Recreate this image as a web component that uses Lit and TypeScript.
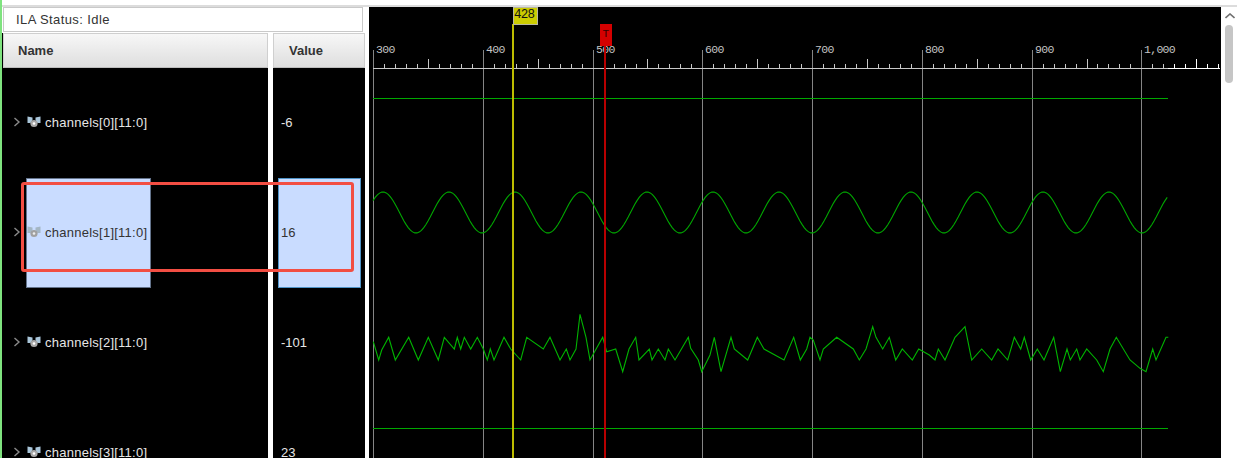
import { LitElement, html, css, svg } from 'lit';
import { customElement } from 'lit/decorators.js';

const rows = [
  { name: 'channels[0][11:0]', value: '-6' },
  { name: 'channels[1][11:0]', value: '16', selected: true },
  { name: 'channels[2][11:0]', value: '-101' },
  { name: 'channels[3][11:0]', value: '23' },
];

// noise trace, read off the reference: [x, y] in page pixels
const noise: number[][] = [
  [373.3,341.7],[378.7,360],[381.7,350],[388.7,337.3],[395.3,360],[408.7,337.3],[418.3,360],[428.3,337.3],[438.3,360],
  [444.3,337.3],[454.3,349],[457.3,337.3],[460.7,349],[464.3,337.3],[470.7,349],[477.3,337.3],[483.3,349],[487.3,360],
  [490.3,349],[494,360],[504,337.3],[510.7,349],[520.7,360],[526.7,337.3],[543.3,349],[550,337.3],[560,360],[566.3,349],
  [570,360],[576,349],[580,314.3],[586,337.3],[590,360],[602.7,337.3],[606.7,351.7],[615.7,349],[622.7,371.7],[629,349],
  [635.7,337.3],[639,360],[649.3,349],[652,360],[658.3,349],[665,360],[668.3,349],[675,360],[688.3,337.3],[690.7,348.3],
  [698.3,360],[701.7,371.7],[710,355],[714.3,337.3],[721,371.7],[731,337.3],[734.3,349],[747.7,360],[757.3,337.3],
  [764,349],[784,360],[793.7,337.3],[800.3,360],[806.7,349],[810,337.3],[813.3,340],[820,360],[823.3,349],[836.7,337.3],
  [853.3,349],[859.3,360],[866,349],[872.7,326.7],[876,337.3],[882.7,349],[889.3,337.3],[895.7,360],[902.3,349],
  [912.3,360],[918.7,349],[929.3,355],[935,360],[938.3,349],[945,360],[955,337.3],[965,326.7],[971.7,360],[981.7,349],
  [991.7,360],[998,349],[1007.7,360],[1014.3,337.3],[1020.7,349],[1024.3,337.3],[1030.7,360],[1037.3,349],[1044,360],
  [1053.7,337.3],[1060.3,371.7],[1067,349],[1070.3,360],[1076.7,349],[1080,360],[1086.7,349],[1096.7,360],[1103.3,371.7],
  [1110,349],[1116.3,337.3],[1130,360],[1140,368.3],[1146,371.7],[1152.7,349],[1156,360],[1166,337.3],[1168.3,337.3],
];

const toX = (v: number) => 373 + (v - 300) * 1.0977;

function sinePoints() {
  const pts: string[] = [];
  for (let x = 373; x <= 1168; x += 2.2) {
    pts.push(`${x},${(212.5 - 20.5 * Math.cos(((x - 383) / 66) * Math.PI * 2)).toFixed(1)}`);
  }
  return pts.join(' ');
}

@customElement('app-root')
export class AppRoot extends LitElement {
  static styles = css`
    :host {
      display: block;
      width: 1237px;
      height: 458px;
      overflow: hidden;
      background: #fff;
      font-family: 'Liberation Sans', Arial, sans-serif;
      font-size: 13px;
    }
    .app { position: relative; display: flex; height: 458px; }
    .strip { width: 2px; background: #7fe37f; flex: none; }
    .main { flex: 1; display: flex; flex-direction: column; min-width: 0; }
    .topbar { height: 5px; border-bottom: 2px solid #dcdcdc; flex: none; }
    .panes { flex: 1; display: flex; min-height: 0; }
    .left { width: 367px; flex: none; display: flex; flex-direction: column; }
    .status {
      height: 25px;
      box-sizing: border-box;
      margin: 0 6px 1px 1px;
      padding-left: 12px;
      display: flex;
      align-items: center;
      border: 1px solid #c9c9c9;
      color: #333;
      letter-spacing: 0.4px;
    }
    .cols { flex: 1; display: flex; gap: 5px; min-height: 0; }
    .col { display: flex; flex-direction: column; overflow: hidden; background: #000; }
    .col.names { width: 266px; }
    .col.values { width: 92px; }
    .head {
      height: 35px;
      flex: none;
      box-sizing: border-box;
      display: flex;
      align-items: center;
      background: linear-gradient(#f7f7f7, #dedede);
      border: 1px solid #cfcfcf;
      border-bottom-color: #bdbdbd;
      font-weight: bold;
      color: #333;
    }
    .names .head { padding-left: 14px; margin-left: 1px; }
    .values .head { padding-left: 15px; }
    .row { height: 110px; flex: none; display: flex; align-items: center; }
    .chevron { width: 8px; height: 10px; margin: 0 5px 2px 11px; flex: none; }
    .cell {
      height: 110px;
      box-sizing: border-box;
      padding-bottom: 2px;
      display: flex;
      align-items: center;
      color: #e6e6e6;
      border: 1px solid transparent;
    }
    .name-cell { width: 125px; gap: 4px; letter-spacing: 0.25px; white-space: nowrap; }
    .icon { width: 14px; height: 12px; flex: none; }
    .value-cell { width: 83px; margin-left: 5px; padding-left: 2px; }
    .selected { background: #c9dcff; color: #333; }
    .name-cell.selected { border-color: #64748c; }
    .value-cell.selected { border-color: #4f94c8; }
    .wave { flex: 1; background: #000; min-width: 0; }
    .wave svg { display: block; }
    .wave text { font-family: 'Liberation Mono', monospace; }
    .scrollbar { width: 16px; flex: none; display: flex; flex-direction: column; align-items: center; }
    .scrollbar svg { margin: 6px 0 0 2px; display: block; }
    .thumb { width: 8px; height: 58px; margin-top: 6px; border-radius: 4px; background: #c6c6c6; }
    .callout {
      position: absolute;
      left: 21px;
      top: 182px;
      width: 333px;
      height: 90px;
      box-sizing: border-box;
      border: 3px solid #f24e43;
      border-radius: 3px;
    }
  `;

  renderChevron() {
    return html`<svg class="chevron" viewBox="0 0 8 10">
      <path d="M1.5 1 L6 5 L1.5 9" fill="none" stroke="#8a8a8a" stroke-width="1.4" />
    </svg>`;
  }

  renderIcon(selected?: boolean) {
    const wing = selected ? '#a4b6c4' : '#a9c6da';
    const hub = selected ? '#a0a0a0' : '#a8a8a8';
    return html`<svg class="icon" viewBox="0 0 14 12">
      <path d="M0.5 0.5 L5.5 1.5 L5.5 4 L3.5 7 L0.5 7 Z" fill=${wing} />
      <path d="M13.5 0.5 L8.5 1.5 L8.5 4 L10.5 7 L13.5 7 Z" fill=${wing} />
      <circle cx="7" cy="7.5" r="3.6" fill=${hub} />
      <circle cx="7" cy="7.5" r="1.3" fill=${selected ? '#eee' : '#fff'} />
    </svg>`;
  }

  renderRuler() {
    const ticks = [];
    for (let v = 300; v <= 1070; v += 10) {
      const x = Math.round(toX(v)) + 0.5;
      if (v % 100 === 0) continue;
      const top = v % 50 === 0 ? 59 : 64;
      ticks.push(svg`<line x1=${x} x2=${x} y1=${top} y2="68" stroke=${x > 1168 ? '#fff' : '#c8c8c8'} />`);
    }
    return ticks;
  }

  renderGrid() {
    const out = [];
    for (let v = 300; v <= 1000; v += 100) {
      const x = Math.round(toX(v)) + 0.5;
      out.push(svg`<line x1=${x} x2=${x} y1="50" y2="458" stroke="#858585" />`);
      const label = v === 1000 ? '1,000' : String(v);
      out.push(svg`<text x=${x + 2.5} y="52.5" fill="#c4c4c4" font-size="11.5" letter-spacing="-0.7">${label}</text>`);
    }
    return out;
  }

  renderWave() {
    return html`<svg width="852" height="451" viewBox="369 7 852 451">
      <g shape-rendering="crispEdges">
        ${this.renderGrid()}
        <line x1="373" x2="1168" y1="68.5" y2="68.5" stroke="#c8c8c8" />
        <line x1="1168" x2="1220" y1="68.5" y2="68.5" stroke="#fff" />
        ${this.renderRuler()}
        <line x1="373" x2="1168" y1="98.5" y2="98.5" stroke="#00a800" />
        <line x1="373" x2="1168" y1="428.5" y2="428.5" stroke="#00a800" />
      </g>
      <polyline points=${sinePoints()} fill="none" stroke="#00a800" stroke-width="1.1" />
      <polyline points=${noise.map((p) => p.join(',')).join(' ')} fill="none" stroke="#00b400" stroke-width="1.1" />
      <g shape-rendering="crispEdges">
        <rect x="512" y="24" width="2" height="434" fill="#bcbc00" />
        <rect x="513" y="7" width="24" height="17" fill="#cccc00" stroke="#b8b8a0" />
        <rect x="604" y="46" width="2" height="412" fill="#b80000" />
        <rect x="600" y="24" width="12" height="22" fill="#d40000" />
      </g>
      <text x="514" y="18" fill="#111" font-size="12.5" letter-spacing="-0.8">428</text>
      <text x="602.5" y="36.5" fill="#300" font-size="11">T</text>
    </svg>`;
  }

  render() {
    return html`
      <div class="app">
        <div class="strip"></div>
        <div class="main">
          <div class="topbar"></div>
          <div class="panes">
            <div class="left">
              <div class="status">ILA Status: Idle</div>
              <div class="cols">
                <div class="col names">
                  <div class="head">Name</div>
                  ${rows.map((r) => html`
                    <div class="row">
                      ${this.renderChevron()}
                      <div class="cell name-cell ${r.selected ? 'selected' : ''}">
                        ${this.renderIcon(r.selected)}
                        <span>${r.name}</span>
                      </div>
                    </div>`)}
                </div>
                <div class="col values">
                  <div class="head">Value</div>
                  ${rows.map((r) => html`
                    <div class="row">
                      <div class="cell value-cell ${r.selected ? 'selected' : ''}">${r.value}</div>
                    </div>`)}
                </div>
              </div>
            </div>
            <div class="wave">${this.renderWave()}</div>
            <div class="scrollbar">
              <svg width="10" height="6" viewBox="0 0 10 6">
                <path d="M0.5 5 L5 1 L9.5 5" fill="none" stroke="#707070" stroke-width="1.6" />
              </svg>
              <div class="thumb"></div>
            </div>
          </div>
        </div>
        <div class="callout"></div>
      </div>
    `;
  }
}
